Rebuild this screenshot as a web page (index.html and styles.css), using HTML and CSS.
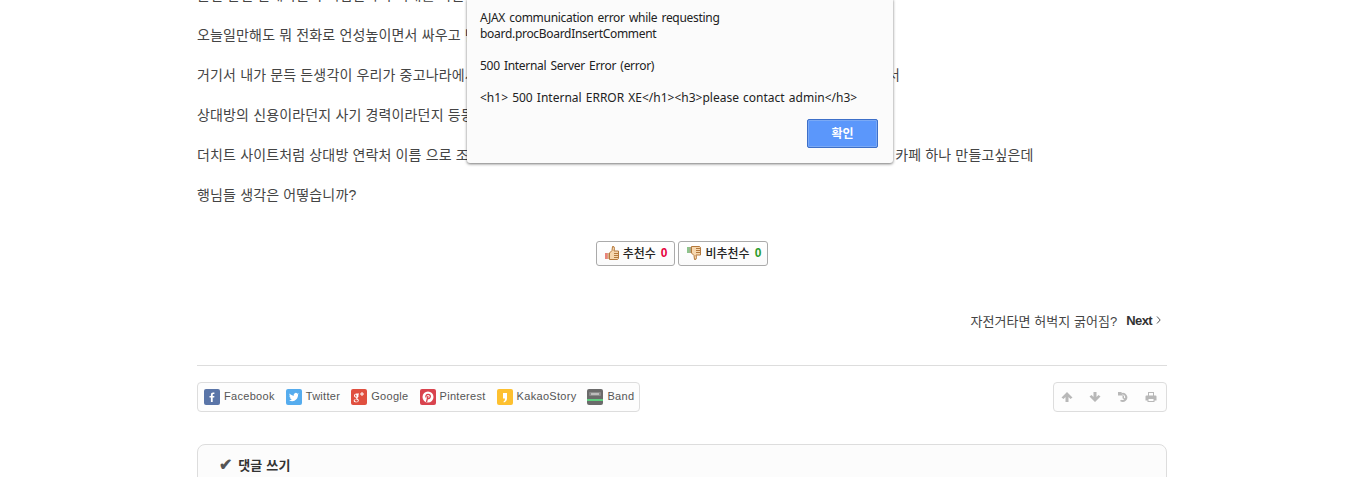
FILE: index.html
```html
<!doctype html>
<html lang="ko">
<head>
	<meta charset="UTF-8">
	<title>게시글</title>
	<link rel="stylesheet" href="styles.css">
</head>
<body>
	<div class="container">
		<div class="article">
			<p>물건 팔면 판매자들이 직접만나서 거래를 하는데 &nbsp; &nbsp; 사기도 많고</p>
			<p>오늘일만해도 뭐 전화로 언성높이면서 싸우고 난리도 아니었습니다 그래서 제가 가만히</p>
			<p>거기서 내가 문득 든생각이 우리가 중고나라에서 물건을 살때 상대방이 어떤 사람인지 알수가 없잖아 그래서 정말 답 해서</p>
			<p>상대방의 신용이라던지 사기 경력이라던지 등등을 미리 알수있는 방법이 있으면 좋겠다고</p>
			<p>더치트 사이트처럼 상대방 연락처 이름 으로 조회하면 거래 내역이랑 평판이 전부 다 이런 저런 것 나오는 그런 사이트나 카페 하나 만들고싶은데</p>
			<p>행님들 생각은 어떻습니까?</p>
		</div>

		<div class="votebox">
			<a class="votebtn" href="#">
				<svg width="16" height="16" viewBox="0 0 16 16"><rect x="1" y="8" width="3" height="6" fill="#e8837a"/><rect x="3.5" y="8" width="2" height="6" fill="#d9b38c"/><path d="M5.500 8 8 5.500 8.500 1.500 Q10.500 1 10.500 3.500 L10 6 H14.500 L14.500 13.500 Q14 14.500 13 14.500 H5.500Z" fill="#f6d7ae" stroke="#b5793c"/><path d="M10 8.500h4.500M10 10.500h4.500M10 12.500h4" stroke="#b5793c" fill="none"/></svg>
				<span class="votetxt">추천수</span><b class="num red">0</b>
			</a>
			<a class="votebtn" href="#">
				<svg width="16" height="16" viewBox="0 0 16 16"><rect x="1" y="2" width="3" height="6" fill="#8cc48c"/><rect x="3.500" y="2" width="2" height="6" fill="#a9a98c"/><path d="M5.500 8 8 10.500 8.500 14.500 Q10.500 15 10.500 12.500 L10 10 H14.500 L14.500 2.500 Q14 1.500 13 1.500 H5.500Z" fill="#f6d7ae" stroke="#b5793c"/><path d="M10 7.500h4.500M10 5.500h4.500M10 3.500h4" stroke="#b5793c" fill="none"/></svg>
				<span class="votetxt">비추천수</span><b class="num green">0</b>
			</a>
		</div>

		<div class="nextrow">
			<span class="nexttitle">자전거타면 허벅지 굵어짐?</span>
			<b class="nextlabel">Next</b>
			<svg width="5" height="8" viewBox="0 0 5 8"><path d="M1 .5 4.200 4 1 7.500" fill="none" stroke="#555"/></svg>
		</div>

		<div class="toolbar">
			<div class="sharebox">
				<a class="share" href="#">
					<svg class="ico" viewBox="0 0 16 16"><rect width="16" height="16" rx="2" fill="#5a75a8"/><path d="M8.700 13V8.600h1.500l.2-1.700H8.700V5.900c0-.5.200-.8.800-.8h.9V3.600c-.3 0-.8-.1-1.300-.1-1.300 0-2.200.8-2.200 2.200v1.200H5.500v1.700h1.400V13z" fill="#fff"/></svg>Facebook
				</a>
				<a class="share" href="#">
					<svg class="ico" viewBox="0 0 16 16"><rect width="16" height="16" rx="2" fill="#55acee"/><path d="M13 5.100c-.4.200-.8.300-1.200.3.400-.3.800-.7.900-1.100-.4.200-.9.400-1.300.5a2 2 0 0 0-3.500 1.900C6.200 6.600 4.700 5.800 3.700 4.500c-.5.900-.3 2.100.6 2.700-.3 0-.6-.1-.9-.3 0 1 .7 1.900 1.600 2-.3.100-.6.100-.9 0 .3.800 1 1.400 1.900 1.400-.9.700-1.900 1-3 .9 3.900 2.400 9.100.2 9.100-5.600.4-.4.700-.7.900-1.100" fill="#fff"/></svg>Twitter
				</a>
				<a class="share" href="#">
					<svg class="ico" viewBox="0 0 16 16"><rect width="16" height="16" rx="2" fill="#e04f3f"/><path d="M8 4.500H5.500C4 4.500 3 5.500 3 6.700c0 1.100.9 2 2.200 1.900-.3.600 0 1 .3 1.300-1.600 0-2.800.7-2.800 1.800 0 1 1.100 1.600 2.500 1.600 1.600 0 2.600-.9 2.600-1.900 0-1.300-1.500-1.600-1.500-2.200 0-.5 1.300-.8 1.300-2.200 0-.6-.3-1-.6-1.300L8 5.500zM4.500 5.500c.9 0 1.500 2.300.6 2.400-1 0-1.500-2.300-.6-2.400zM5 10.400c1 0 1.900.6 1.900 1.300 0 .7-.7 1-1.500 1-1 0-1.700-.5-1.700-1.200 0-.7.700-1.100 1.300-1.100z" fill="#fff" fill-rule="evenodd"/><path d="M11 3v4M9 5h4" stroke="#fff"/></svg>Google
				</a>
				<a class="share" href="#">
					<svg class="ico" viewBox="0 0 16 16"><rect width="16" height="16" rx="2" fill="#d9434e"/><circle cx="8" cy="8" r="5.500" fill="#fff"/><path d="M6.500 13 8 7M6.200 8.500C5.300 7 6.300 5.300 8.100 5.300c1.500 0 2.300 1 2.200 2.200-.1 1.300-1 2.200-2 2-.5-.1-.8-.4-.9-.7" fill="none" stroke="#d9434e" stroke-width="1.300"/></svg>Pinterest
				</a>
				<a class="share" href="#">
					<svg class="ico" viewBox="0 0 16 16"><rect width="16" height="16" rx="2" fill="#fdc02f"/><path d="M6 4h4v5.500C10 11.500 8.500 13 6.800 13.500L6.500 12.500C7.500 12 8 11.200 8 9.500H6z" fill="#fff"/></svg>KakaoStory
				</a>
				<a class="share" href="#">
					<svg class="ico" viewBox="0 0 16 16"><rect width="16" height="16" rx="2" fill="#6b6b6b"/><rect y="10" width="16" height="2" fill="#5fcf80"/><rect x="2" y="3" width="12" height="4" rx="1" fill="#8a8a8a"/><path d="M4 5h8" stroke="#eee"/></svg>Band
				</a>
			</div>
			<div class="toolbox">
				<svg class="tool" viewBox="0 0 12 12"><path d="M6 1 11.500 6.500 9.500 8 7.500 6v5h-3V6L2.500 8 .5 6.500z"/></svg>
				<svg class="tool" viewBox="0 0 12 12"><path d="M6 11 .5 5.500 2.500 4 4.500 6V1h3v5l2-2 2 1.500z"/></svg>
				<svg class="tool" viewBox="0 0 12 12"><path d="M1 1h4L4 2.300A4.500 4.500 0 1 1 3 10l1-1.300A2.800 2.800 0 1 0 5 3.500l1 1H1zM5.500 4.500h1.500v2.200l1.500 1-.7 1-2.300-1.500z"/></svg>
				<svg class="tool" viewBox="0 0 12 12"><path d="M3 1h6v3.500h1.500A1 1 0 0 1 11.500 5.500V9.500H9.500V11h-7V9.500H.5V5.500A1 1 0 0 1 1.500 4.500H3zM4 2v2.500h4V2zM3.500 8v2h5V8z" fill-rule="evenodd"/></svg>
			</div>
		</div>

		<div class="commentbox">
			<div class="commenttit"><span class="check">✔</span>댓글 쓰기</div>
		</div>
	</div>

	<div class="modal">
		<div class="modalmsg">AJAX communication error while requesting<br>board.procBoardInsertComment<br><br>500 Internal Server Error (error)<br><br><span class="modalcode">&lt;h1&gt; 500 Internal ERROR XE&lt;/h1&gt;&lt;h3&gt;please contact admin&lt;/h3&gt;</span></div>
		<div class="modalbtns"><button class="okbtn">확인</button></div>
	</div>
</body>
</html>
```

FILE: styles.css
```css
html,body{
	margin: 0;
	padding: 0;
	height: 477px;
	overflow: hidden;
	background: #fff;
}
body{
	font-family: "Liberation Sans","Noto Sans CJK KR",sans-serif;
	color: #444;
	position: relative;
}
a{
	color: inherit;
	text-decoration: none;
}
.container{
	width: 970px;
	margin: -15px auto 0;
}
.article p{
	margin: 0 0 20px;
	font-size: 14px;
	line-height: 20px;
	letter-spacing: .15px;
	white-space: nowrap;
	color: #444;
}
.votebox{
	display: flex;
	justify-content: center;
	gap: 3px;
	margin-top: 36px;
}
.votebtn{
	display: flex;
	align-items: center;
	padding: 0 6px 2px 7px;
	height: 21px;
	border: 1px solid #aaa;
	border-radius: 3px;
	font-size: 12px;
	color: #222;
	background: linear-gradient(#fff,#fafafa);
}
.votebtn:first-child{
	padding-right: 7px;
}
.votetxt{
	margin: 0 5px 0 3px;
	font-weight: 500;
}
.num{
	font-size: 12px;
}
.red{ color: #e6003c; }
.green{ color: #2a9a2a; }
.nextrow{
	display: flex;
	justify-content: flex-end;
	align-items: center;
	gap: 9px;
	height: 20px;
	margin-top: 44px;
	padding-right: 6px;
	font-size: 13px;
	color: #444;
}
.nexttitle{
	letter-spacing: .05px;
}
.nextlabel{
	color: #333;
	letter-spacing: -.6px;
	margin-right: -5px;
}
.toolbar{
	display: flex;
	justify-content: space-between;
	margin-top: 35px;
	padding-top: 16px;
	border-top: 1px solid #ddd;
}
.sharebox,.toolbox{
	height: 28px;
	display: flex;
	align-items: center;
	border: 1px solid #ddd;
	border-radius: 4px;
	background: #fdfdfd;
}
.sharebox{
	padding: 0 5px 0 6px;
	gap: 11px;
}
.share{
	display: flex;
	align-items: center;
	gap: 4px;
	padding-bottom: 2px;
	font-size: 11px;
	line-height: 14px;
	letter-spacing: .3px;
	color: #555;
}
.ico{
	width: 16px;
	height: 16px;
	margin-bottom: -2px;
}
.toolbox{
	padding: 0 9px 0 7px;
	gap: 16px;
}
.tool{
	width: 12px;
	height: 12px;
	fill: #b8b8b8;
}
.commentbox{
	margin-top: 32px;
	height: 100px;
	border: 1px solid #ddd;
	border-radius: 8px;
	background: #fcfcfc;
	padding: 12px 21px;
}
.commenttit{
	font-size: 13px;
	line-height: 16px;
	font-weight: bold;
	letter-spacing: .2px;
	color: #333;
}
.check{
	font-size: 16px;
	margin-right: 6px;
	color: #555;
}
.modal{
	position: absolute;
	left: 467px;
	top: -1px;
	width: 426px;
	box-sizing: border-box;
	height: 164px;
	padding: 11px 15px 0 13px;
	background: #fbfbfb;
	border-radius: 0 0 3px 3px;
	box-shadow: 0 1px 3px rgba(0,0,0,.55);
}
.modalmsg{
	font-family: "Noto Sans","Noto Sans CJK KR",sans-serif;
	font-size: 12px;
	line-height: 16px;
	letter-spacing: -.3px;
	word-spacing: 1.4px;
	color: #222;
	white-space: nowrap;
}
.modalcode{
	letter-spacing: 0;
	word-spacing: 1px;
}
.modalbtns{
	display: flex;
	justify-content: flex-end;
	margin-top: 13px;
}
.okbtn{
	width: 71px;
	height: 29px;
	padding: 0 0 3px;
	border: 1px solid #3d6fc8;
	border-radius: 2px;
	background: #5b97fb;
	box-shadow: inset 0 0 0 1px #7aa9f5;
	color: #fff;
	font-family: "Noto Sans CJK KR",sans-serif;
	font-size: 12px;
	font-weight: bold;
}
```
